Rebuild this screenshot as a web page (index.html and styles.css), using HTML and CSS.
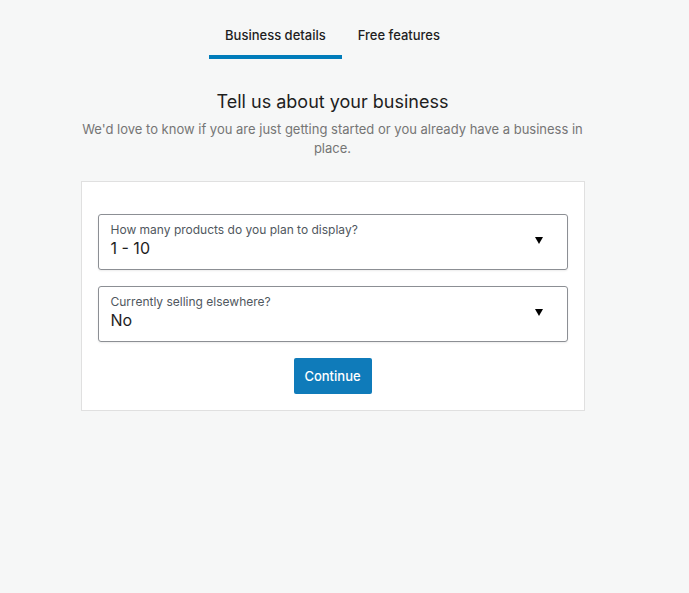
FILE: index.html
```html
<!DOCTYPE html>
<html>
<head>
<meta charset="utf-8">
<link rel="stylesheet" href="styles.css">
</head>
<body>
<div class="page">
  <nav class="tabs">
    <div class="tab active">Business details</div>
    <div class="tab">Free features</div>
  </nav>
  <h1 class="title">Tell us about your business</h1>
  <p class="subtitle">We'd love to know if you are just getting started or you already have a business in place.</p>
  <div class="card">
    <div class="select">
      <div class="select-text">
        <div class="select-label">How many products do you plan to display?</div>
        <div class="select-value">1 - 10</div>
      </div>
      <span class="arrow"></span>
    </div>
    <div class="select">
      <div class="select-text">
        <div class="select-label">Currently selling elsewhere?</div>
        <div class="select-value">No</div>
      </div>
      <span class="arrow"></span>
    </div>
    <div class="actions">
      <button class="btn">Continue</button>
    </div>
  </div>
</div>
</body>
</html>
```

FILE: styles.css
```css
html, body {
  margin: 0;
  padding: 0;
  background: #f6f7f7;
  font-family: Inter, "Noto Sans", sans-serif;
  color: #1e1e1e;
}
.page {
  width: 665px;
  display: flex;
  flex-direction: column;
  align-items: center;
}
.tabs {
  display: flex;
  margin-top: 15px;
}
.tab {
  font-size: 13px;
  font-weight: 500;
  line-height: 20px;
  padding: 10px 16px 10px;
  border-bottom: 4px solid transparent;
  color: #1e1e1e;
}
.tab.active {
  border-bottom-color: #007cba;
}
.title {
  font-size: 18px;
  font-weight: 400;
  margin: 31px 0 0;
  line-height: 24px;
}
.subtitle {
  width: 510px;
  text-align: center;
  font-size: 13px;
  line-height: 19px;
  color: #757575;
  margin: 6px 0 0;
}
.card {
  box-sizing: border-box;
  width: 504px;
  margin-top: 23px;
  background: #fff;
  border: 1px solid #e0e0e0;
  padding: 32px 16px 16px;
  display: flex;
  flex-direction: column;
  gap: 16px;
}
.select {
  box-sizing: border-box;
  height: 56px;
  border: 1px solid #8c8f94;
  border-radius: 3px;
  box-shadow: 0 1px 2px rgba(0,0,0,0.08);
  display: flex;
  align-items: center;
  padding: 0 24px 4px 12px;
}
.select-text {
  flex: 1;
}
.select-label {
  font-size: 12px;
  line-height: 16px;
  color: #50575e;
}
.select-value {
  font-size: 16px;
  line-height: 20px;
  color: #1e1e1e;
}
.arrow {
  width: 0;
  height: 0;
  border-left: 4.5px solid transparent;
  border-right: 4.5px solid transparent;
  border-top: 7px solid #000;
  margin-top: 0;
}
.actions {
  display: flex;
  justify-content: center;
}
.btn {
  font-family: inherit;
  font-size: 13px;
  font-weight: 500;
  color: #fff;
  background: #0f7bba;
  border: none;
  border-radius: 2px;
  height: 36px;
  width: 78px;
  padding: 0;
}
```
